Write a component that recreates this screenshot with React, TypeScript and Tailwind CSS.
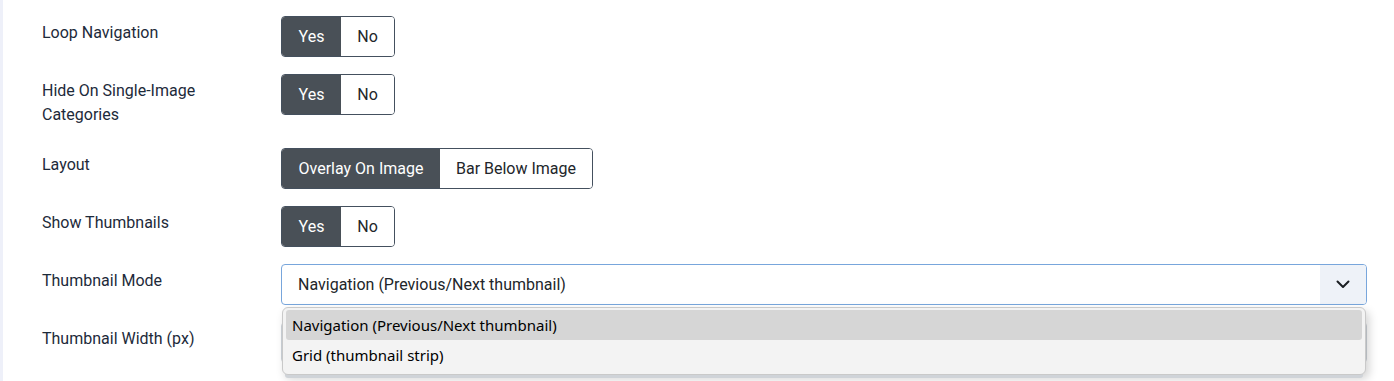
import { useState } from 'react';

const labelCn = 'w-[239px] shrink-0 pt-[5px] pb-[4px] text-[16px] leading-6 text-[#1d2a3a]';
const groupCn = 'flex h-[41px] rounded-[4px] border border-[#44505e] overflow-hidden';

type Opt = { label: string; w: string };

const Switcher = ({ options, active }: { options: Opt[]; active: number }) => {
  return (
    <div className={groupCn}>
      {options.map((o, i) => (
        <div
          key={o.label}
          className={`${o.w} flex items-center justify-center text-[16px] ${
            i === active ? 'bg-[#495057] text-white' : 'bg-white text-[#22262a]'
          }`}
        >
          {o.label}
        </div>
      ))}
    </div>
  );
};

const yesNo: Opt[] = [
  { label: 'Yes', w: 'w-[59px]' },
  { label: 'No', w: 'w-[53px]' },
];

const Row = ({ label, children }: { label: React.ReactNode; children: React.ReactNode }) => (
  <div className="flex mb-[17px]">
    <div className={labelCn}>{label}</div>
    <div className="flex-1">{children}</div>
  </div>
);

export default function App() {
  const [open] = useState(true);

  return (
    <div className="w-[1394px] h-[381px] overflow-hidden bg-white flex font-['Roboto',sans-serif]">
      <div className="w-[3px] shrink-0 bg-[#eef0f9]" />
      <div className="flex-1 pl-[39px] pr-[27px] pt-[16px]">
        <Row label="Loop Navigation">
          <div className="flex">
            <Switcher options={yesNo} active={0} />
          </div>
        </Row>
        <Row label={<>Hide On Single-Image<br />Categories</>}>
          <div className="flex">
            <Switcher options={yesNo} active={0} />
          </div>
        </Row>
        <Row label="Layout">
          <div className="flex">
            <Switcher
              options={[
                { label: 'Overlay On Image', w: 'w-[158px]' },
                { label: 'Bar Below Image', w: 'w-[152px]' },
              ]}
              active={0}
            />
          </div>
        </Row>
        <Row label="Show Thumbnails">
          <div className="flex">
            <Switcher options={yesNo} active={0} />
          </div>
        </Row>
        <Row label="Thumbnail Mode">
          <div className="relative">
            <div className="flex h-[41px] rounded-[4px] border border-[#78a6dc] bg-white overflow-hidden">
              <div className="flex-1 flex items-center pl-[16px] text-[16px] text-[#22262a]">
                Navigation (Previous/Next thumbnail)
              </div>
              <div className="w-[46px] flex items-center justify-center bg-[#eef2f8]">
                <svg width="14" height="9" viewBox="0 0 14 9" fill="none">
                  <path d="M1.5 1.5 L7 7 L12.5 1.5" stroke="#1b1f24" strokeWidth="2" strokeLinecap="round" strokeLinejoin="round" />
                </svg>
              </div>
            </div>
            {open && (
              <div className="absolute left-[1px] right-[1px] top-[43px] z-10 rounded-[6px] border border-[#c9c9c9] bg-[#f3f3f3] px-[3px] pt-[2px] pb-[4px] font-['Noto_Sans',sans-serif] text-[15px] text-black shadow-[0_6px_0_-3px_#cfd3d8,3px_4px_10px_rgba(0,0,0,0.18)]">
                <div className="h-[30px] flex items-center pl-[6px] rounded-[3px] bg-[#d6d6d6]">
                  Navigation (Previous/Next thumbnail)
                </div>
                <div className="h-[30px] flex items-center pl-[6px]">
                  Grid (thumbnail strip)
                </div>
              </div>
            )}
          </div>
        </Row>
        <Row label="Thumbnail Width (px)">
          <div className="h-[41px] rounded-[4px] border border-[#ced4da] bg-white" />
        </Row>
      </div>
    </div>
  );
}
